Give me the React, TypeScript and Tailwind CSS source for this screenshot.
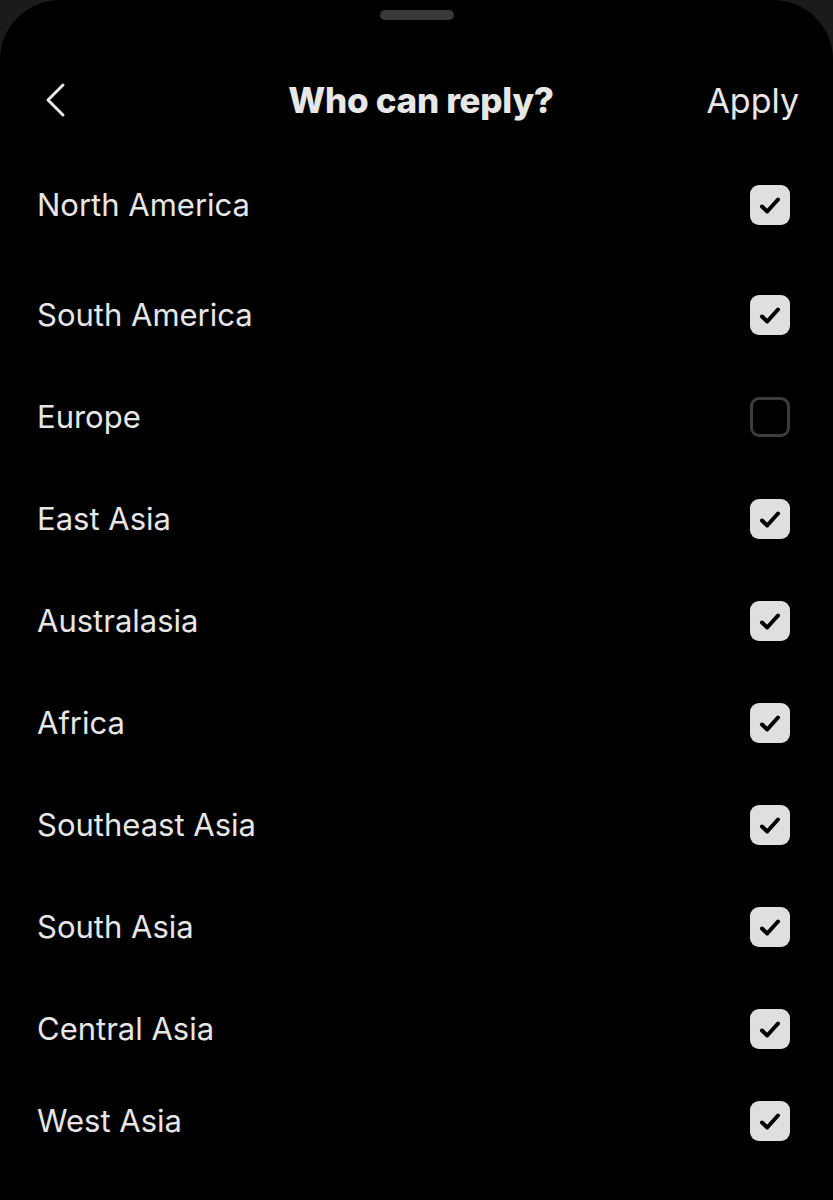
type Region = { name: string; checked: boolean; spacing?: string };

const regions: Region[] = [
  { name: "North America", checked: true, spacing: "mb-[8px]" },
  { name: "South America", checked: true },
  { name: "Europe", checked: false },
  { name: "East Asia", checked: true },
  { name: "Australasia", checked: true },
  { name: "Africa", checked: true },
  { name: "Southeast Asia", checked: true },
  { name: "South Asia", checked: true },
  { name: "Central Asia", checked: true, spacing: "-mb-[10px]" },
  { name: "West Asia", checked: true },
];

const Checkbox = ({ checked }: { checked: boolean }) =>
  checked ? (
    <div className="w-10 h-10 rounded-[9px] bg-[#dfdfdf] flex items-center justify-center">
      <svg width="40" height="40" viewBox="0 0 40 40" fill="none">
        <path
          d="M12 21.5 L17.2 26.5 L28 14.5"
          stroke="#000"
          strokeWidth="4"
          strokeLinecap="round"
          strokeLinejoin="round"
        />
      </svg>
    </div>
  ) : (
    <div className="w-10 h-10 rounded-[9px] border-[3px] border-[#3c3c3c]" />
  );

const BackIcon = () => (
  <svg width="24" height="36" viewBox="0 0 24 36" fill="none">
    <path
      d="M20 3 L5 18 L20 33"
      stroke="#e7e7e7"
      strokeWidth="3"
      strokeLinecap="round"
      strokeLinejoin="round"
    />
  </svg>
);

const App = () => {
  return (
    <div className="w-full h-[1200px] bg-[#1b1b1d] overflow-hidden font-['Inter',sans-serif]">
      <div className="h-full bg-black rounded-t-[60px] flex flex-col">
        <div className="pt-[10px] flex justify-center">
          <div className="w-[74px] h-[10px] rounded-full bg-[#38383a]" />
        </div>

        <div className="mt-[50px] h-[60px] flex items-center px-[34px]">
          <div className="flex-1 pl-[9px]">
            <BackIcon />
          </div>
          <h1 className="text-[35px] font-extrabold text-[#e7e7e7] tracking-[-0.3px]">Who can reply?</h1>
          <div className="flex-1 flex justify-end">
            <span className="text-[34px] text-[#e7e7e7]">Apply</span>
          </div>
        </div>

        <ul className="mt-[24px] flex flex-col">
          {regions.map((region) => (
            <li
              key={region.name}
              className={`h-[102px] flex items-center justify-between pl-[37px] pr-[43px] ${region.spacing ?? ""}`}
            >
              <span className="text-[31px] text-[#e6e6e6]">{region.name}</span>
              <Checkbox checked={region.checked} />
            </li>
          ))}
        </ul>
      </div>
    </div>
  );
};

export default App;
